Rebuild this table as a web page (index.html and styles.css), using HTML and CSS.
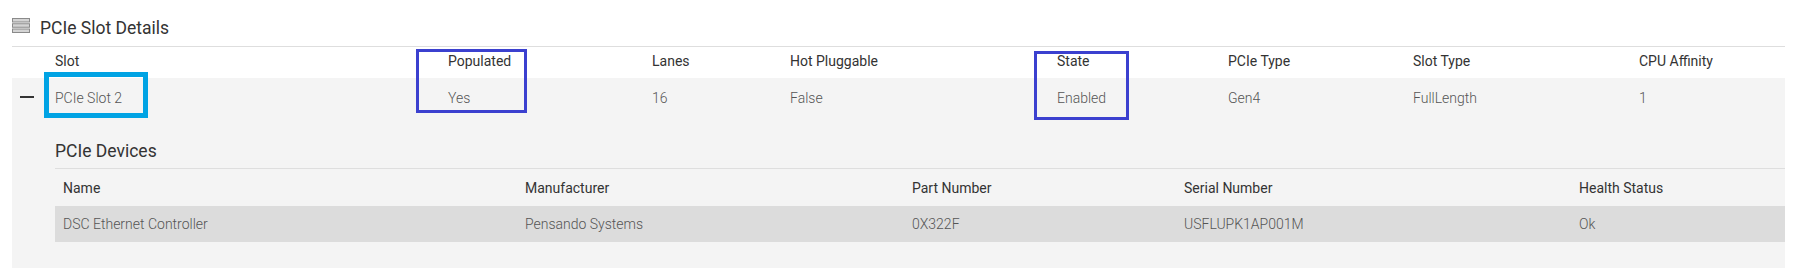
FILE: index.html
```html
<!DOCTYPE html>
<html lang="en">
<head>
    <meta charset="UTF-8">
    <title>PCIe Slot Details</title>
    <link rel="stylesheet" href="styles.css">
</head>
<body>
    <div class="panel">
        <div class="panel-title">
            <svg class="list-icon" width="18" height="15" viewBox="0 0 18 15">
                <rect x="0.5" y="0.5" width="17" height="3.5" fill="#d4d4d4" stroke="#8a8a8a"/>
                <rect x="0.5" y="5.75" width="17" height="3.5" fill="#d4d4d4" stroke="#8a8a8a"/>
                <rect x="0.5" y="11" width="17" height="3.5" fill="#d4d4d4" stroke="#8a8a8a"/>
            </svg>
            <h2>PCIe Slot Details</h2>
        </div>

        <div class="slot-table">
            <div class="slot-row slot-head">
                <div class="cell"></div>
                <div class="cell">Slot</div>
                <div class="cell">Populated</div>
                <div class="cell">Lanes</div>
                <div class="cell">Hot Pluggable</div>
                <div class="cell">State</div>
                <div class="cell">PCIe Type</div>
                <div class="cell">Slot Type</div>
                <div class="cell">CPU Affinity</div>
            </div>

            <div class="slot-expanded">
                <div class="slot-row slot-data">
                    <div class="cell"><span class="collapse"></span></div>
                    <div class="cell">PCIe Slot 2</div>
                    <div class="cell">Yes</div>
                    <div class="cell">16</div>
                    <div class="cell">False</div>
                    <div class="cell">Enabled</div>
                    <div class="cell">Gen4</div>
                    <div class="cell">FullLength</div>
                    <div class="cell">1</div>
                </div>

                <div class="devices">
                    <h3>PCIe Devices</h3>
                    <div class="dev-row dev-head">
                        <div class="cell">Name</div>
                        <div class="cell">Manufacturer</div>
                        <div class="cell">Part Number</div>
                        <div class="cell">Serial Number</div>
                        <div class="cell">Health Status</div>
                    </div>
                    <div class="dev-row dev-data">
                        <div class="cell">DSC Ethernet Controller</div>
                        <div class="cell">Pensando Systems</div>
                        <div class="cell">0X322F</div>
                        <div class="cell">USFLUPK1AP001M</div>
                        <div class="cell">Ok</div>
                    </div>
                </div>
            </div>
        </div>
    </div>

    <!-- highlight marks drawn over the screenshot -->
    <div class="mark mark-slot"></div>
    <div class="mark mark-populated"></div>
    <div class="mark mark-state"></div>
</body>
</html>
```

FILE: styles.css
```css
* {
    margin: 0;
    padding: 0;
    box-sizing: border-box;
}

body {
    font-family: Roboto, 'Liberation Sans', Arial, sans-serif;
    font-size: 14px;
    color: #333;
    background: #fff;
    position: relative;
}

.panel {
    padding: 0 18px 0 12px;
}

.panel-title {
    display: flex;
    align-items: flex-start;
    gap: 10px;
    padding: 16px 0 6px;
    border-bottom: 1px solid #dedede;
}

.list-icon {
    margin-top: 2px;
    flex-shrink: 0;
}

.panel-title h2 {
    font-size: 17.5px;
    font-weight: 400;
    line-height: 24px;
    color: #333;
}

.slot-row {
    display: grid;
    grid-template-columns: 35px 393px 204px 138px 267px 171px 185px 226px 154px;
}

.slot-row .cell,
.dev-row .cell {
    display: flex;
    align-items: center;
    padding: 0 8px;
    white-space: nowrap;
}

.slot-head {
    height: 31px;
}

.slot-head .cell {
    padding-bottom: 3px;
}

.slot-expanded {
    background: #f4f4f4;
    padding-bottom: 26px;
}

.slot-data {
    height: 40px;
}

.slot-data .cell,
.dev-data .cell {
    font-weight: 300;
    color: #555;
}

.collapse {
    display: block;
    width: 14px;
    height: 2px;
    background: #333;
    margin-top: -3px;
}

.devices {
    padding: 21px 0 0 43px;
}

.devices h3 {
    font-size: 17.5px;
    font-weight: 400;
    line-height: 24px;
    padding-bottom: 5px;
    border-bottom: 1px solid #dedede;
}

.dev-row {
    display: grid;
    grid-template-columns: 462px 387px 272px 395px 214px;
}

.dev-head {
    height: 37px;
}

.dev-data {
    height: 36px;
    background: #dcdcdc;
}

.mark {
    position: absolute;
    pointer-events: none;
}

.mark-slot {
    left: 44px;
    top: 72px;
    width: 104px;
    height: 46px;
    border: 5px solid #00a3e4;
}

.mark-populated {
    left: 416px;
    top: 49px;
    width: 111px;
    height: 64px;
    border: 3px solid #3b40cf;
}

.mark-state {
    left: 1034px;
    top: 51px;
    width: 95px;
    height: 69px;
    border: 3px solid #3b40cf;
}
```
